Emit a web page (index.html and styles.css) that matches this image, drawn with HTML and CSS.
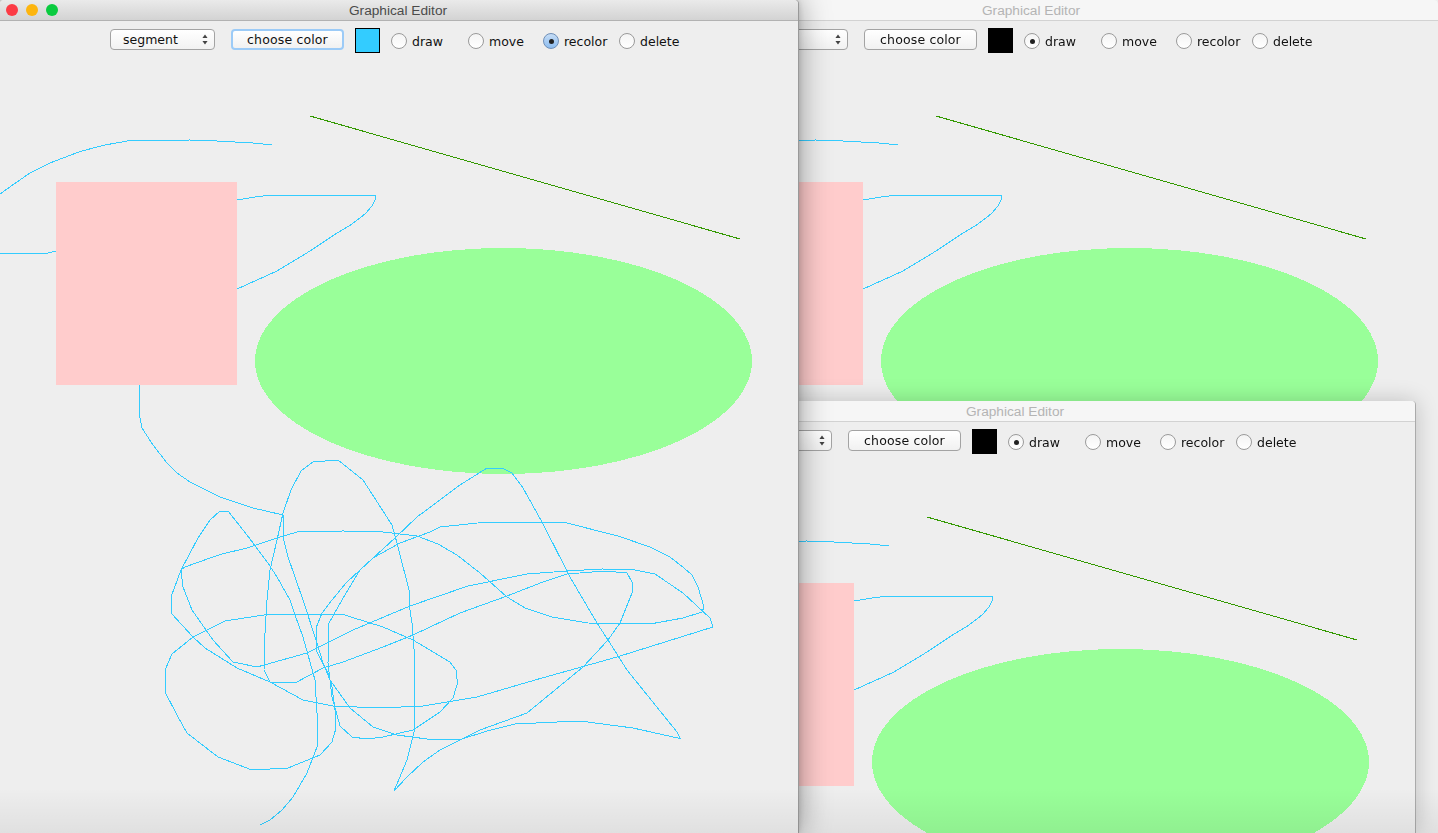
FILE: index.html
```html
<!DOCTYPE html>
<html>
<head>
	<title>Graphical Editor</title>
	<meta charset="utf-8">
	<link rel="stylesheet" href="styles.css">
</head>
<body>
	<svg class="defs" width="0" height="0">
		<symbol id="drawing" viewBox="0 61 812 772" width="812" height="772">
			<ellipse class="oval" cx="503.5" cy="361" rx="248.5" ry="113"/>
			<polyline class="scribble" points="0,194 14,184 30,173 50,163 80,151.5 105,145 130,140.5 160,140.5 190,140 217,141 253,143 272,145"/>
			<polyline class="scribble" points="0,253 48,253 56,251 237,200 255,197 272,195 375.5,195 375.5,199 372,206 366,213 360,218 349,226 337,233 310,251 277,271 257,280 237,289 139,385 139,413 142,428 153,445 167,463 177,473 190,482 220,497 253,508 283,515 283,537 288,557 295,577 303,600 317,643 323,663 330,680 350,708 373,727 397,735 427,739 462,739 480,730 527,713 583,667 608,640 620,623 628,603 632,593 632,582 627,573 605,571 567,574 543,582 507,596 460,613 413,635 383,647 343,662 323,668 295,683 270,682 264,670 265,633 267,600 270,570 277,540 283,513 291,490 301,471 313,462 338,460 363,480 392,525 397,543 409,590 410,610 412,623 414.5,655 414.5,730 407,760 394,791 407,777 423,762 440,750 462,739 487,731 515,724 557,722 580,721 633,728 680,738.5 677,732 627,670 608,640 597,623 570,577 542,522 523,488 512,473 502,468 487,468 460,485 417,517 395,538 360,570 342,600 329,623 328,663 332,697 340,726 352,737 367,739 383,737 413,730 440,712 453,698 457.5,683 456,670 450,662 413,640 383,627 367,622 343,614.5 267,614.5 225,621 193,637 172,654 165,670 165,692 177,715 187,733 218,757 252,770 288,768 320,755 332,742 336,728 335,710 332,687 328,673 316,650 316,628 322,613 332,600 346,583 360,570 373,558 400,543 430,532 440,527 487,522 563,522 618,536 650,547 670,557 684,568 692,575 698,587 704,607 702,612 683,618 650,624 588,623 552,617 525,608 507,597 480,573 457,555 438,544 417,536 383,532 343,531 297,532 277,538 247,548 222,554 213,557 185,567 181,570 183,587 192,610 213,640 233,662 257,667 307,653 353,630 410,606 468,586 527,574 567,571 602,569 632,569.5 655,574 683,593 710,618 713,627 617,657 535,680 477,697 423,706 380,708 333,706 303,700 270,682 237,668 205,648 193,637 171,613 171,597 181,570 198,538 210,520 220,511 228,511 247,535 268,563 277,577 290,600 295,615 303,637 315,680 317,713 317,747 307,773 293,797 282,810 270,820 260,825"/>
			<line class="segment" x1="310" y1="116" x2="740" y2="239"/>
			<rect class="box" x="56" y="182" width="181" height="203"/>
		</symbol>
		<symbol id="updown" viewBox="0 0 7 11" width="6" height="11" preserveAspectRatio="none">
			<path d="M3.5 0.5 L6.5 4 L0.5 4 Z M0.5 7 L6.5 7 L3.5 10.5 Z"/>
		</symbol>
	</svg>

	<div class="window win-back inactive">
		<div class="titlebar"><span class="title">Graphical Editor</span></div>
		<div class="toolbar">
			<div class="select"><span>oval</span><svg class="updown"><use href="#updown"/></svg></div>
			<div class="button">choose color</div>
			<div class="swatch"></div>
			<label class="radio r-draw"><i class="dot on"></i>draw</label>
			<label class="radio r-move"><i class="dot"></i>move</label>
			<label class="radio r-recolor"><i class="dot"></i>recolor</label>
			<label class="radio r-delete"><i class="dot"></i>delete</label>
		</div>
		<div class="canvas"><svg width="812" height="772"><use href="#drawing"/></svg></div>
	</div>

	<div class="window win-mid inactive">
		<div class="titlebar"><span class="title">Graphical Editor</span></div>
		<div class="toolbar">
			<div class="select"><span>oval</span><svg class="updown"><use href="#updown"/></svg></div>
			<div class="button">choose color</div>
			<div class="swatch"></div>
			<label class="radio r-draw"><i class="dot on"></i>draw</label>
			<label class="radio r-move"><i class="dot"></i>move</label>
			<label class="radio r-recolor"><i class="dot"></i>recolor</label>
			<label class="radio r-delete"><i class="dot"></i>delete</label>
		</div>
		<div class="canvas"><svg width="812" height="772"><use href="#drawing"/></svg></div>
	</div>

	<div class="window win-front">
		<div class="titlebar">
			<div class="lights"><i class="light red"></i><i class="light yellow"></i><i class="light green"></i></div>
			<span class="title">Graphical Editor</span>
		</div>
		<div class="toolbar">
			<div class="select"><span>segment</span><svg class="updown"><use href="#updown"/></svg></div>
			<div class="button focused">choose color</div>
			<div class="swatch picked"></div>
			<label class="radio r-draw"><i class="dot"></i>draw</label>
			<label class="radio r-move"><i class="dot"></i>move</label>
			<label class="radio r-recolor"><i class="dot on selected"></i>recolor</label>
			<label class="radio r-delete"><i class="dot"></i>delete</label>
		</div>
		<div class="canvas"><svg width="812" height="772"><use href="#drawing"/></svg></div>
	</div>

	<div class="bottom-fade"></div>
</body>
</html>
```

FILE: styles.css
```css
html, body {
	margin: 0;
	height: 833px;
	overflow: hidden;
	background-color: #EEE;
}

.defs {
	display: block;
	position: absolute;
}

.window {
	position: absolute;
	display: flex;
	flex-direction: column;
	background-color: #EEE;
	border-radius: 4px 4px 0 0;
	overflow: hidden;
	font-family: "DejaVu Sans", sans-serif;
	font-size: 12.5px;
	color: #111;
}

.win-back {
	left: 626px;
	top: 0;
	width: 812px;
	height: 833px;
}

.win-mid {
	left: 617px;
	top: 401px;
	width: 798px;
	height: 432px;
	border-right: 1px solid #AAA;
	overflow: visible;
	box-shadow: 0 0 22px rgba(0, 0, 0, .2);
}

.win-front {
	left: 0;
	top: 0;
	width: 798px;
	height: 833px;
	overflow: visible;
	box-shadow: 1px 0 0 #999, 0 0 32px rgba(0, 0, 0, .42), 0 0 6px rgba(0, 0, 0, .2);
}

.titlebar {
	height: 20px;
	flex: none;
	display: grid;
	grid-template-columns: 1fr auto 1fr;
	align-items: center;
	background: linear-gradient(#EAEAEA, #D3D3D3);
	border-bottom: 1px solid #B2B2B2;
	border-radius: 4px 4px 0 0;
}

.inactive .titlebar {
	background: #F6F6F6;
	border-bottom-color: #D2D2D2;
}

.title {
	grid-column: 2;
	margin-right: 2px;
	font-family: "Liberation Sans", sans-serif;
	font-size: 13.7px;
	color: #4B4B4B;
}

.inactive .title {
	color: #B4B4B4;
}

.lights {
	display: flex;
	gap: 8px;
	padding-left: 6px;
}

.light {
	width: 12px;
	height: 12px;
	border-radius: 50%;
}

.red { background-color: #FC3B45; }
.yellow { background-color: #FDB50E; }
.green { background-color: #0ACB3F; }

.toolbar {
	height: 39px;
	padding-bottom: 1px;
	flex: none;
	display: flex;
	justify-content: center;
	align-items: center;
}

.inactive .toolbar {
	filter: blur(.35px);
}

.select {
	width: 105px;
	height: 21px;
	margin-bottom: 2px;
	box-sizing: border-box;
	display: flex;
	justify-content: space-between;
	align-items: center;
	padding: 0 6px 0 12px;
	background: linear-gradient(#FFF, #F2F2F2);
	border: 1px solid #A3A3A3;
	border-radius: 4px;
}

.updown {
	width: 6px;
	height: 11px;
	fill: #444;
}

.button {
	width: 113px;
	height: 21px;
	margin-bottom: 2px;
	box-sizing: border-box;
	margin-left: 16px;
	text-align: center;
	line-height: 19px;
	letter-spacing: .15px;
	background: linear-gradient(#FFF, #F1F1F1);
	border: 1px solid #A3A3A3;
	border-radius: 4px;
}

.button.focused {
	border: 2px solid #9CCBF7;
	line-height: 17px;
}

.swatch {
	width: 25px;
	height: 25px;
	box-sizing: border-box;
	margin-left: 11px;
	background-color: #000;
}

.swatch.picked {
	background-color: #33CCFF;
	border: 1px solid #000;
}

.radio {
	display: flex;
	align-items: center;
	gap: 5px;
	margin-top: 1px;
	box-sizing: border-box;
}

.radio:first-of-type {
	margin-left: 11px;
}

.r-draw { width: 77px; }
.r-move { width: 75px; }
.r-recolor { width: 76px; }
.r-delete { width: 69px; }

.dot {
	flex: none;
	width: 16px;
	height: 16px;
	box-sizing: border-box;
	display: flex;
	align-items: center;
	justify-content: center;
	border: 1px solid #9A9A9A;
	border-radius: 50%;
	background: linear-gradient(#F4F4F4, #FFF);
}

.dot.on::after {
	content: "";
	width: 5px;
	height: 5px;
	border-radius: 50%;
	background-color: #222;
}

.dot.selected {
	border-color: #6E8FB8;
	background: linear-gradient(#C6DDF6, #8DBDF0);
}

.canvas {
	flex: 1;
	overflow: hidden;
}

.canvas svg {
	display: block;
}

.oval {
	fill: #99FF99;
	shape-rendering: crispEdges;
}

.box {
	fill: #FFCCCC;
	shape-rendering: crispEdges;
}

.scribble {
	fill: none;
	stroke: #33CCFF;
	stroke-width: 1;
	shape-rendering: crispEdges;
}

.segment {
	stroke: #339900;
	stroke-width: 1;
	shape-rendering: crispEdges;
}

.bottom-fade {
	position: absolute;
	left: 0;
	right: 0;
	bottom: 0;
	height: 45px;
	background: linear-gradient(rgba(0, 0, 0, 0), rgba(0, 0, 0, .06));
	pointer-events: none;
}
```
